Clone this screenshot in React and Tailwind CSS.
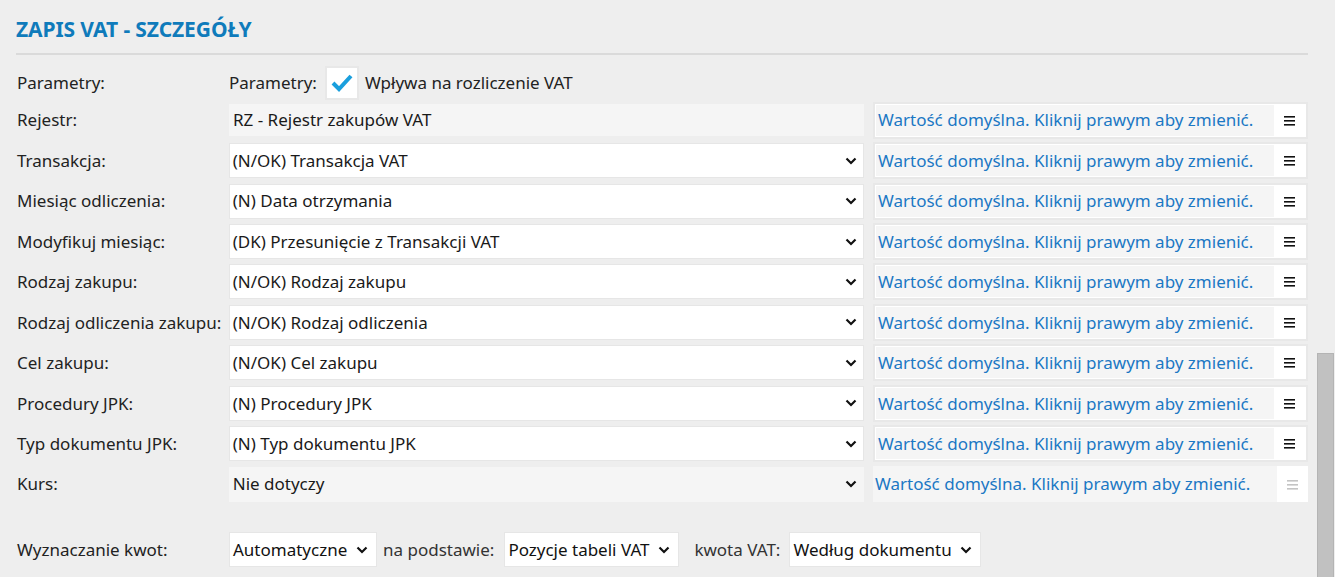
const ROWS = [
  { label: 'Rejestr:', value: 'RZ - Rejestr zakupów VAT', kind: 'readonly' },
  { label: 'Transakcja:', value: '(N/OK) Transakcja VAT' },
  { label: 'Miesiąc odliczenia:', value: '(N) Data otrzymania' },
  { label: 'Modyfikuj miesiąc:', value: '(DK) Przesunięcie z Transakcji VAT' },
  { label: 'Rodzaj zakupu:', value: '(N/OK) Rodzaj zakupu' },
  { label: 'Rodzaj odliczenia zakupu:', value: '(N/OK) Rodzaj odliczenia' },
  { label: 'Cel zakupu:', value: '(N/OK) Cel zakupu' },
  { label: 'Procedury JPK:', value: '(N) Procedury JPK' },
  { label: 'Typ dokumentu JPK:', value: '(N) Typ dokumentu JPK' },
  { label: 'Kurs:', value: 'Nie dotyczy', kind: 'disabled' },
]

const DEFAULT_HINT = 'Wartość domyślna. Kliknij prawym aby zmienić.'

function Chevron({ className = '' }) {
  return (
    <svg width="12" height="8" viewBox="0 0 12 8" className={className}>
      <polyline points="1.5,1.5 6,6 10.5,1.5" fill="none" stroke="#111" strokeWidth="2.2" />
    </svg>
  )
}

function MenuIcon({ muted }) {
  const color = muted ? '#c4c4c4' : '#111'
  return (
    <svg width="11" height="11" viewBox="0 0 11 11">
      <rect x="0" y="1" width="11" height="1.6" fill={color} />
      <rect x="0" y="5" width="11" height="1.6" fill={color} />
      <rect x="0" y="9" width="11" height="1.6" fill={color} />
    </svg>
  )
}

function Field({ value, kind }) {
  if (kind === 'readonly') {
    return (
      <div className="w-[635px] h-[32px] bg-[#f5f5f5] flex items-center pl-[4px] text-[#1a1a1a]">
        {value}
      </div>
    )
  }
  const bg = kind === 'disabled' ? 'bg-[#f5f5f5] border-[#f5f5f5]' : 'bg-white border-[#e6e6e6]'
  return (
    <div className={`w-[636px] h-[35px] border ${bg} flex items-center justify-between pl-[3px] pr-[6px] text-[#1a1a1a]`}>
      <span>{value}</span>
      <Chevron />
    </div>
  )
}

function DefaultPanel({ muted }) {
  return (
    <div
      className={
        muted
          ? 'w-[435px] h-[36px] bg-white flex'
          : 'w-[435px] h-[37px] border-2 border-[#e8e8e8] bg-white p-[1px] flex'
      }
    >
      <div className="flex-1 bg-[#f5f5f5] flex items-center pl-[2px] text-[#1b78c4]">
        {DEFAULT_HINT}
      </div>
      <div className="w-[31px] flex items-center justify-center">
        <MenuIcon muted={muted} />
      </div>
    </div>
  )
}

function SmallSelect({ value, width }) {
  return (
    <div className={`${width} h-[35px] bg-white border border-[#e6e6e6] flex items-center justify-between pl-[3px] pr-[8px] text-[#111]`}>
      <span>{value}</span>
      <Chevron />
    </div>
  )
}

export default function App() {
  return (
    <div
      className="relative w-[1335px] h-[577px] overflow-hidden bg-[#eeeeee] text-[17px] text-[#222]"
      style={{ fontFamily: '"Noto Sans", "Open Sans", sans-serif' }}
    >
      <div className="pl-[16px] pr-[27px]">
        {/* Header */}
        <div className="pt-[15px] pb-[9px] border-b-2 border-[#dadada]">
          <h1 className="text-[21px] leading-[29px] font-bold text-[#0f7bbb] tracking-[-0.1px]">
            ZAPIS VAT - SZCZEGÓŁY
          </h1>
        </div>

        {/* Parametry */}
        <div className="mt-[11px] h-[34px] flex items-center">
          <div className="w-[213px] pl-[1px]">Parametry:</div>
          <div className="flex items-center">
            <span>Parametry:</span>
            <div className="ml-[8px] w-[34px] h-[34px] bg-white border-2 border-[#e8e8e8] flex items-center justify-center">
              <svg width="22" height="18" viewBox="0 0 22 18">
                <polyline points="2,9 8,15 20,2" fill="none" stroke="#1a9fdd" strokeWidth="4" />
              </svg>
            </div>
            <span className="ml-[6px]">Wpływa na rozliczenie VAT</span>
          </div>
        </div>

        {/* Rows */}
        {ROWS.map((row) => (
          <div key={row.label} className="h-[40.44px] flex items-center">
            <div className="w-[213px] pl-[1px] whitespace-nowrap">{row.label}</div>
            <Field value={row.value} kind={row.kind} />
            <div className="ml-[9px]">
              <DefaultPanel muted={row.kind === 'disabled'} />
            </div>
          </div>
        ))}

        {/* Wyznaczanie kwot */}
        <div className="mt-[28px] h-[35px] flex items-center">
          <div className="w-[213px] pl-[1px]">Wyznaczanie kwot:</div>
          <SmallSelect value="Automatyczne" width="w-[148px]" />
          <span className="ml-[6px] text-[#333]">na podstawie:</span>
          <div className="ml-[10px]">
            <SmallSelect value="Pozycje tabeli VAT" width="w-[175px]" />
          </div>
          <span className="ml-[15px] text-[#333]">kwota VAT:</span>
          <div className="ml-[9px]">
            <SmallSelect value="Według dokumentu" width="w-[192px]" />
          </div>
        </div>
      </div>

      {/* scrollbar thumb */}
      <div className="absolute left-[1317px] top-[353px] w-[17px] h-[230px] bg-[#c1c1c1] border border-[#b4b4b4]" />
    </div>
  )
}
